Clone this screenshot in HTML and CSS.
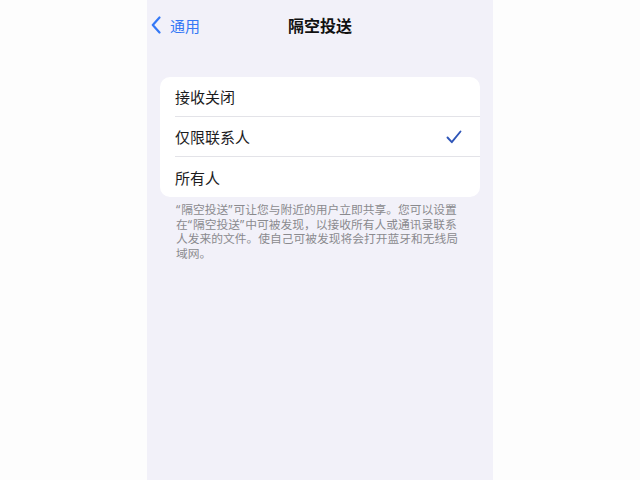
FILE: index.html
```html
<!DOCTYPE html>
<html lang="zh-CN">
<head>
<meta charset="utf-8">
<title>隔空投送</title>
<link rel="stylesheet" href="styles.css">
</head>
<body>
<div class="stage">
  <div class="phone">
    <div class="nav">
      <div class="back">
        <svg class="chev" width="10" height="18" viewBox="0 0 10 18"><path d="M8.5 1.5 L1.8 9 L8.5 16.5" fill="none" stroke="#3478f6" stroke-width="2.2" stroke-linecap="round" stroke-linejoin="round"/></svg>
        <span class="back-text">通用</span>
      </div>
      <div class="title">隔空投送</div>
    </div>
    <div class="card">
      <div class="row"><span class="label">接收关闭</span></div>
      <div class="row"><span class="label">仅限联系人</span>
        <svg class="check" width="16" height="14" viewBox="0 0 16 14"><path d="M1.5 7.5 L5.8 12.2 L14.5 1.5" fill="none" stroke="#2f56b8" stroke-width="1.9" stroke-linecap="round" stroke-linejoin="round"/></svg>
      </div>
      <div class="row last"><span class="label">所有人</span></div>
    </div>
    <div class="footer">
      <div class="line"><span class="q">“</span>隔空投送<span class="q">”</span>可让您与附近的用户立即共享。您可以设置</div>
      <div class="line">在<span class="q">“</span>隔空投送<span class="q">”</span>中可被发现，以接收所有人或通讯录联系</div>
      <div class="line">人发来的文件。使自己可被发现将会打开蓝牙和无线局</div>
      <div class="line">域网。</div>
    </div>
  </div>
</div>
</body>
</html>
```
FILE: styles.css
```css
html, body {
  margin: 0;
  padding: 0;
  background: #fdfdfd;
  font-family: "Noto Sans CJK SC", "Noto Sans", sans-serif;
}
.stage {
  display: flex;
  justify-content: center;
}
.phone {
  width: 346px;
  height: 480px;
  background: #f2f1f9;
  display: flex;
  flex-direction: column;
}
.nav {
  position: relative;
  height: 50px;
  display: flex;
  align-items: center;
  justify-content: center;
}
.back {
  position: absolute;
  left: 4px;
  top: 0;
  height: 50px;
  display: flex;
  align-items: center;
  gap: 9px;
}
.back-text {
  color: #3478f6;
  font-size: 15px;
}
.title {
  font-size: 16px;
  font-weight: 700;
  color: #111;
}
.card {
  margin: 27px 13px 0 13px;
  background: #fff;
  border-radius: 10px;
  overflow: hidden;
}
.row {
  height: 40px;
  margin-left: 15px;
  padding-right: 18px;
  display: flex;
  align-items: center;
  justify-content: space-between;
  border-bottom: 1px solid #e3e3e8;
  box-sizing: border-box;
}
.row.last {
  border-bottom: none;
}
.label {
  font-size: 15px;
  color: #1c1c1e;
}
.footer {
  margin: 5px 15px 0 29px;
  font-size: 11.75px;
  color: #8a8a8e;
  white-space: nowrap;
}
.line {
  height: 14.6px;
  line-height: 14.6px;
}
.q {
  display: inline-block;
  height: 14.6px;
  line-height: 14.6px;
  font-family: "Noto Sans", sans-serif;
  letter-spacing: 1px;
  vertical-align: top;
}
```
